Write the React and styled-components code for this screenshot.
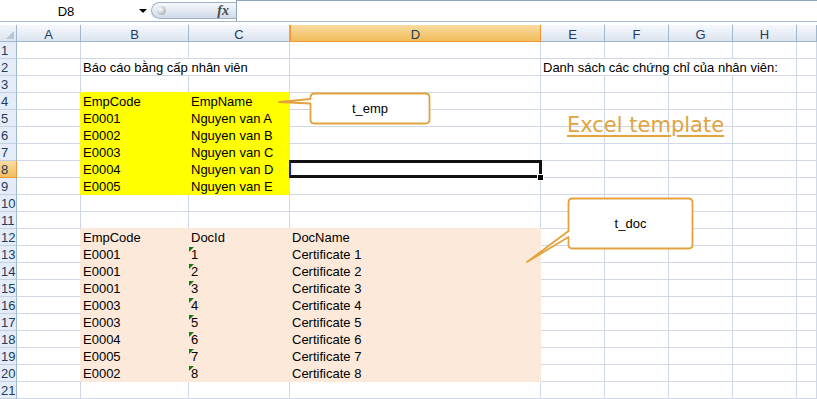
import React from 'react'
import styled, { createGlobalStyle } from 'styled-components'

const GlobalStyle = createGlobalStyle`
  html, body {
    margin: 0;
    padding: 0;
    background: #fff;
    overflow: hidden;
  }
  body {
    font-family: "Liberation Sans", Arial, sans-serif;
    font-size: 13px;
  }
`

const GRID_LINE = '#d0d7e5'
const HEAD_LINE = '#9eb6ce'
const YELLOW = '#ffff00'
const PEACH = '#fce9da'
const ORANGE = '#e2a33f'

const COLS = [
  { key: 'A', w: 64 },
  { key: 'B', w: 108 },
  { key: 'C', w: 101 },
  { key: 'D', w: 251 },
  { key: 'E', w: 64 },
  { key: 'F', w: 64 },
  { key: 'G', w: 64 },
  { key: 'H', w: 64 },
  { key: 'I', w: 20 },
]

const SELECTED = { row: 8, col: 'D' }

// cell contents keyed by row, then column
const DATA = {
  2: {
    B: { text: 'Báo cáo bằng cấp nhân viên', span: 2 },
    E: { text: 'Danh sách các chứng chỉ của nhân viên:', span: 4 },
  },
  4: { B: { text: 'EmpCode' }, C: { text: 'EmpName' } },
}

const emps = ['A', 'B', 'C', 'D', 'E']
emps.forEach((n, i) => {
  DATA[5 + i] = { B: { text: `E000${i + 1}` }, C: { text: `Nguyen van ${n}` } }
})

DATA[12] = { B: { text: 'EmpCode' }, C: { text: 'DocId' }, D: { text: 'DocName' } }
const docEmps = ['E0001', 'E0001', 'E0001', 'E0003', 'E0003', 'E0004', 'E0005', 'E0002']
docEmps.forEach((code, i) => {
  DATA[13 + i] = {
    B: { text: code },
    C: { text: String(i + 1), flag: true },
    D: { text: `Certificate ${i + 1}` },
  }
})

const fillAt = (row, col) => {
  if (row >= 4 && row <= 9 && (col === 'B' || col === 'C')) return YELLOW
  if (row >= 12 && row <= 20 && ['B', 'C', 'D'].includes(col)) return PEACH
  return null
}

const Page = styled.div`
  position: relative;
  width: 817px;
  height: 399px;
  overflow: hidden;
  background: #fff;
`

const TopBar = styled.div`
  display: flex;
  height: 21px;
  border-bottom: 1px solid #a9b9cd;
`

const NameBox = styled.div`
  width: 132px;
  display: flex;
  align-items: center;
  justify-content: center;
  padding-top: 1px;
  color: #000;
`

const DropArrow = styled.div`
  width: 17px;
  display: flex;
  align-items: center;
  justify-content: center;
  padding-left: 5px;
  box-sizing: border-box;

  &::after {
    content: '';
    border-left: 4px solid transparent;
    border-right: 4px solid transparent;
    border-top: 4px solid #000;
  }
`

const FxPill = styled.div`
  position: relative;
  margin: 2px 0 0 2px;
  width: 85px;
  height: 17px;
  box-sizing: border-box;
  border: 1px solid #9db0c7;
  border-right: none;
  border-radius: 9px 0 0 9px;
  background: linear-gradient(#f6f8fb, #e3eaf3 50%, #cfdae8);
`

const PillKnob = styled.span`
  position: absolute;
  left: 5px;
  top: 3px;
  width: 9px;
  height: 9px;
  border-radius: 50%;
  background: radial-gradient(circle at 35% 35%, #ffffff, #c4c8ce 55%, #8f959d);
`

const FxLabel = styled.span`
  position: absolute;
  right: 7px;
  top: 0;
  font-family: "Liberation Serif", "Times New Roman", serif;
  font-style: italic;
  font-weight: bold;
  font-size: 14px;
  line-height: 15px;
  color: #4a4a4a;
`

const FormulaBox = styled.div`
  flex: 1;
  border-top: 1px solid #8ea3bd;
  border-left: 1px solid #8ea3bd;
  background: #fff;
`

const Sheet = styled.div`
  margin-top: 3px;
  display: grid;
  grid-template-columns: 17px ${COLS.map(c => `${c.w}px`).join(' ')};
  grid-auto-rows: 17px;
`

const Corner = styled.div`
  position: relative;
  box-sizing: border-box;
  background: linear-gradient(#f3f6fb, #dde5f0);
  border-right: 1px solid ${HEAD_LINE};
  border-bottom: 1px solid ${HEAD_LINE};

  &::after {
    content: '';
    position: absolute;
    right: 2px;
    bottom: 2px;
    border-left: 8px solid transparent;
    border-bottom: 8px solid #b7c5d6;
  }
`

const ColHead = styled.div`
  box-sizing: border-box;
  text-align: center;
  padding-top: 2px;
  line-height: 15px;
  color: #223b5e;
  border-right: 1px solid ${p => (p.$active ? '#f29536' : HEAD_LINE)};
  border-bottom: 1px solid ${p => (p.$active ? '#f29536' : HEAD_LINE)};
  border-left: ${p => (p.$active ? '1px solid #f29536' : 'none')};
  background: ${p =>
    p.$active
      ? 'linear-gradient(#f9dca3, #f4cb7c 50%, #f1bd5c)'
      : 'linear-gradient(#f6f8fc, #e9eef6 50%, #dde4ee)'};
`

const RowHead = styled.div`
  box-sizing: border-box;
  padding: 1px 0 0 1px;
  line-height: 16px;
  color: #223b5e;
  overflow: hidden;
  white-space: nowrap;
  border-right: 1px solid ${p => (p.$active ? '#f29536' : HEAD_LINE)};
  border-bottom: 1px solid ${p => (p.$active ? '#f29536' : '#c3d1e2')};
  background: ${p =>
    p.$active ? 'linear-gradient(#f9dca3, #f1bd5c)' : '#e4ecf7'};
`

const Cell = styled.div`
  position: relative;
  box-sizing: border-box;
  grid-column: span ${p => p.$span};
  padding: 1px 2px 0;
  line-height: 16px;
  white-space: nowrap;
  color: #000;
  background: ${p => p.$fill || '#fff'};
  border-right: 1px solid ${p => p.$rightLine};
  border-bottom: 1px solid ${p => p.$bottomLine};

  ${p =>
    p.$flag &&
    `
    &::before {
      content: '';
      position: absolute;
      left: 0;
      top: 1px;
      border-top: 5px solid #127a12;
      border-right: 5px solid transparent;
    }
  `}

  ${p =>
    p.$selected &&
    `
    z-index: 2;
    &::after {
      content: '';
      position: absolute;
      left: -1px;
      top: -1px;
      right: -2px;
      bottom: -1px;
      border: 3px solid #111;
      border-left: 2px solid #1414ff;
      pointer-events: none;
    }
  `}
`

const FillHandle = styled.span`
  position: absolute;
  right: -4px;
  bottom: -4px;
  width: 5px;
  height: 5px;
  background: #000;
  border: 1px solid #fff;
  z-index: 3;
`

const Overlay = styled.svg`
  position: absolute;
  left: 0;
  top: 0;
  pointer-events: none;
  z-index: 4;
`

const CalloutLabel = styled.div`
  position: absolute;
  display: flex;
  align-items: center;
  justify-content: center;
  color: #000;
  z-index: 5;
`

const WordArt = styled.div`
  position: absolute;
  left: 567px;
  top: 115px;
  font-family: "DejaVu Sans", Verdana, sans-serif;
  font-size: 21px;
  line-height: 21px;
  color: ${ORANGE};
  text-decoration: underline;
  text-decoration-thickness: 1.5px;
  text-underline-offset: 3px;
  white-space: nowrap;
  z-index: 4;
`

const callouts = [
  {
    label: 't_emp',
    box: { left: 310, top: 93, width: 120, height: 31 },
    d: 'M314.5,93.5 H425.5 Q429.5,93.5 429.5,97.5 V119.5 Q429.5,123.5 425.5,123.5 H314.5 Q310.5,123.5 310.5,119.5 V103.5 L279,102 L310.5,99 V97.5 Q310.5,93.5 314.5,93.5 Z',
  },
  {
    label: 't_doc',
    box: { left: 568, top: 198, width: 125, height: 51 },
    d: 'M572.5,198.5 H688.5 Q692.5,198.5 692.5,202.5 V244.5 Q692.5,248.5 688.5,248.5 H572.5 Q568.5,248.5 568.5,244.5 V237 L527,262 L568.5,231 V202.5 Q568.5,198.5 572.5,198.5 Z',
  },
]

function SheetRows() {
  const rows = []
  for (let r = 1; r <= 21; r++) {
    const rowData = DATA[r] || {}
    rows.push(
      <RowHead key={`h${r}`} $active={r === SELECTED.row}>
        {r}
      </RowHead>
    )
    let skip = 0
    COLS.forEach((col, ci) => {
      if (skip > 0) {
        skip--
        return
      }
      const item = rowData[col.key]
      const span = item?.span || 1
      skip = span - 1
      const fill = fillAt(r, col.key)
      const nextCol = COLS[ci + span]
      const rightFill = fill || (nextCol && fillAt(r, nextCol.key))
      const bottomFill = fill || fillAt(r + 1, col.key)
      const selected = r === SELECTED.row && col.key === SELECTED.col
      rows.push(
        <Cell
          key={`${r}${col.key}`}
          $span={span}
          $fill={fill}
          $rightLine={rightFill || GRID_LINE}
          $bottomLine={bottomFill || GRID_LINE}
          $flag={item?.flag}
          $selected={selected}
        >
          {item?.text}
          {selected && <FillHandle />}
        </Cell>
      )
    })
  }
  return rows
}

export default function App() {
  return (
    <>
      <GlobalStyle />
      <Page>
        <TopBar>
          <NameBox>D8</NameBox>
          <DropArrow />
          <FxPill>
            <PillKnob />
            <FxLabel>fx</FxLabel>
          </FxPill>
          <FormulaBox />
        </TopBar>
        <Sheet>
          <Corner />
          {COLS.map(c => (
            <ColHead key={c.key} $active={c.key === SELECTED.col}>
              {c.key === 'I' ? '' : c.key}
            </ColHead>
          ))}
          <SheetRows />
        </Sheet>

        <Overlay width="817" height="399" viewBox="0 0 817 399">
          {callouts.map(c => (
            <path
              key={c.label}
              d={c.d}
              fill="#fff"
              stroke={ORANGE}
              strokeWidth="1.8"
              strokeLinejoin="round"
            />
          ))}
        </Overlay>
        {callouts.map(c => (
          <CalloutLabel key={c.label} style={c.box}>
            {c.label}
          </CalloutLabel>
        ))}
        <WordArt>Excel template</WordArt>
      </Page>
    </>
  )
}
